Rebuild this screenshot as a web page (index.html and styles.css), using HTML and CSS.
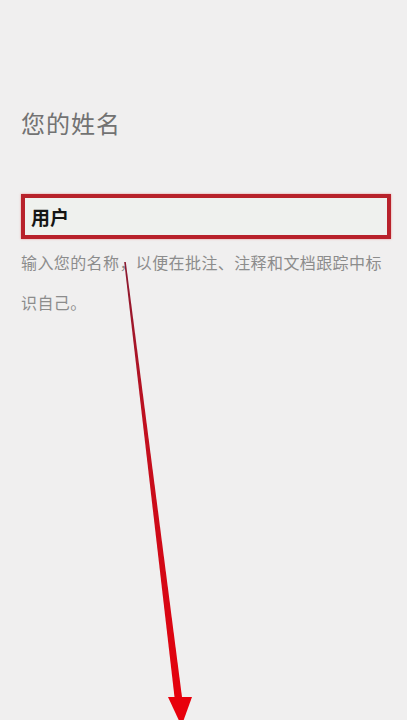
FILE: index.html
```html
<!DOCTYPE html>
<html lang="zh-CN">
<head>
<meta charset="utf-8">
<title>您的姓名</title>
<link rel="stylesheet" href="styles.css">
</head>
<body>
<main class="page">
  <h1 class="title">您的姓名</h1>
  <div class="name-field">用户</div>
  <p class="hint">输入您的名称，以便在批注、注释和文档跟踪中标识自己。</p>
</main>
<svg class="arrow" width="407" height="720" viewBox="0 0 407 720" aria-hidden="true">
  <defs>
    <linearGradient id="ag" x1="0" y1="262" x2="0" y2="720" gradientUnits="userSpaceOnUse">
      <stop offset="0" stop-color="#8a1a30"/>
      <stop offset="0.35" stop-color="#c0101f"/>
      <stop offset="1" stop-color="#e8000c"/>
    </linearGradient>
  </defs>
  <polygon points="124.2,262 125.8,262 182,697 174.5,697" fill="url(#ag)"/>
  <polygon points="168,697 192,697 181.5,726" fill="#e8000c"/>
</svg>
</body>
</html>
```
FILE: styles.css
```css
html, body {
  margin: 0;
  padding: 0;
  background: #f0efef;
}
body {
  width: 407px;
  height: 720px;
  overflow: hidden;
  position: relative;
  font-family: "Noto Sans CJK SC", "Noto Sans", sans-serif;
}
.page {
  padding: 107px 16px 0 21px;
  display: flex;
  flex-direction: column;
}
.title {
  margin: 0;
  font-size: 24px;
  line-height: 32px;
  font-weight: 400;
  letter-spacing: 1px;
  color: #727272;
}
.name-field {
  margin-top: 55px;
  height: 37px;
  border: 4px solid #b8222b;
  box-shadow: 0 0 2px rgba(230, 60, 60, 0.5);
  background: #eff1ee;
  padding: 0 6px;
  display: flex;
  align-items: center;
  font-size: 19px;
  font-weight: 700;
  color: #151515;
}
.hint {
  margin: 3px 0 0;
  font-size: 16px;
  line-height: 40px;
  letter-spacing: 0.4px;
  color: #8c8c8c;
}
.arrow {
  position: absolute;
  left: 0;
  top: 0;
  pointer-events: none;
}
```
